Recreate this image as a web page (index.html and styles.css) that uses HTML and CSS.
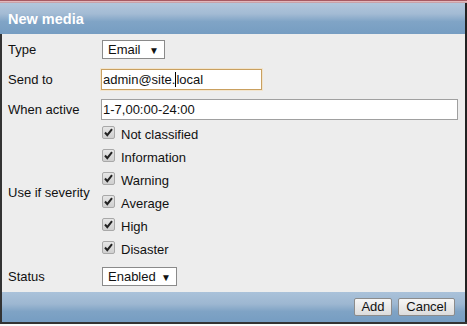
FILE: index.html
```html
<!DOCTYPE html>
<html>
<head>
<meta charset="utf-8">
<link rel="stylesheet" href="styles.css">
</head>
<body>
<div class="dialog">
  <div class="topline"></div>
  <div class="header">New media</div>
  <div class="body">
    <div class="row r-type">
      <div class="label">Type</div>
      <div class="select sel-email"><span>Email</span><span class="arrow">▼</span></div>
    </div>
    <div class="row r-send">
      <div class="label">Send to</div>
      <div class="input focus w-send">admin@site.<span class="caret"></span>local</div>
    </div>
    <div class="row r-when">
      <div class="label">When active</div>
      <div class="input w-when">1-7,00:00-24:00</div>
    </div>
    <div class="row r-sev">
      <div class="label">Use if severity</div>
      <div class="checks">
        <div class="check"><span class="box"><svg viewBox="0 0 13 13" width="13" height="13"><path d="M3 6.5 L5.3 9.2 L10 3.2" fill="none" stroke="#222" stroke-width="2"/></svg></span>Not classified</div>
        <div class="check"><span class="box"><svg viewBox="0 0 13 13" width="13" height="13"><path d="M3 6.5 L5.3 9.2 L10 3.2" fill="none" stroke="#222" stroke-width="2"/></svg></span>Information</div>
        <div class="check"><span class="box"><svg viewBox="0 0 13 13" width="13" height="13"><path d="M3 6.5 L5.3 9.2 L10 3.2" fill="none" stroke="#222" stroke-width="2"/></svg></span>Warning</div>
        <div class="check"><span class="box"><svg viewBox="0 0 13 13" width="13" height="13"><path d="M3 6.5 L5.3 9.2 L10 3.2" fill="none" stroke="#222" stroke-width="2"/></svg></span>Average</div>
        <div class="check"><span class="box"><svg viewBox="0 0 13 13" width="13" height="13"><path d="M3 6.5 L5.3 9.2 L10 3.2" fill="none" stroke="#222" stroke-width="2"/></svg></span>High</div>
        <div class="check"><span class="box"><svg viewBox="0 0 13 13" width="13" height="13"><path d="M3 6.5 L5.3 9.2 L10 3.2" fill="none" stroke="#222" stroke-width="2"/></svg></span>Disaster</div>
      </div>
    </div>
    <div class="row r-status">
      <div class="label">Status</div>
      <div class="select sel-status"><span>Enabled</span><span class="arrow">▼</span></div>
    </div>
  </div>
  <div class="footer">
    <button class="btn btn-add">Add</button>
    <button class="btn btn-cancel">Cancel</button>
  </div>
  <div class="bottomline"></div>
</div>
</body>
</html>
```
FILE: styles.css
```css
html, body {
  margin: 0;
  padding: 0;
  background: #ffffff;
}
.dialog {
  width: 467px;
  height: 326px;
  box-sizing: border-box;
  font-family: "Liberation Sans", Arial, sans-serif;
  font-size: 13px;
  color: #111;
  display: flex;
  flex-direction: column;
  overflow: hidden;
}
.topline {
  height: 3px;
  box-sizing: border-box;
  border-top: 1px solid #a85a62;
  background: #e2b8bc;
  border-bottom: 1px solid #c9a2a8;
}
.header {
  height: 31px;
  box-sizing: border-box;
  padding-left: 8px;
  display: flex;
  align-items: center;
  font-weight: bold;
  font-size: 14.5px;
  color: #ffffff;
  background: linear-gradient(#b2c7dc 0%, #a3bbd4 35%, #80a4c6 60%, #769dc2 100%);
  border-right: 2px solid #222;
}
.body {
  flex: 1;
  background: #ededed;
  border-left: 2px solid #333;
  border-right: 2px solid #222;
  padding: 6px 0 0 6px;
  display: flex;
  flex-direction: column;
}
.row {
  display: flex;
  align-items: center;
}
.label {
  width: 94px;
  flex: none;
}
.r-send { margin-top: 10px; }
.r-when { margin-top: 9px; }
.r-sev { margin-top: 3px; }
.r-status { margin-top: 6px; }

.select {
  height: 19px;
  box-sizing: border-box;
  background: #fff;
  border: 1px solid #8a8a8a;
  display: flex;
  align-items: center;
  justify-content: space-between;
  padding: 0 5px 0 5px;
}
.arrow {
  font-size: 10px;
  margin-top: 1px;
}
.sel-email { width: 63px; }
.sel-status { width: 75px; }

.input {
  height: 21px;
  box-sizing: border-box;
  background: #fff;
  border: 1px solid #a0a0a0;
  padding: 0 1px;
  display: flex;
  align-items: center;
  margin-left: -1px;
}
.input.focus {
  border: 1px solid #c9a060;
  box-shadow: 0 0 0 1px #f2e4cc;
}
.caret {
  display: inline-block;
  width: 1px;
  height: 15px;
  background: #000;
}
.w-send { width: 161px; }
.w-when { width: 357px; }

.checks {
  display: flex;
  flex-direction: column;
}
.check {
  height: 23px;
  display: flex;
  align-items: center;
}
.box {
  width: 13px;
  height: 13px;
  box-sizing: border-box;
  border: 1px solid #a8a8a8;
  border-radius: 2px;
  background: linear-gradient(#e6e6e6, #cfcfcf);
  margin-right: 6px;
  margin-top: -5px;
  display: flex;
  align-items: center;
  justify-content: center;
  overflow: hidden;
}
.box svg {
  flex: none;
}

.footer {
  height: 30px;
  box-sizing: border-box;
  background: linear-gradient(#aac2da 0%, #9db7d1 40%, #7fa3c5 65%, #769dc2 100%);
  border-left: 2px solid #333;
  border-right: 2px solid #222;
  display: flex;
  align-items: center;
  justify-content: flex-end;
  padding-right: 10px;
  gap: 6px;
}
.btn {
  font-family: "Liberation Sans", Arial, sans-serif;
  font-size: 13px;
  height: 18px;
  box-sizing: border-box;
  padding: 0;
  border: 1px solid #8c8c8c;
  border-radius: 2px;
  background: linear-gradient(#f6f6f6, #dcdcdc);
  color: #111;
  line-height: 14px;
}
.btn-add { width: 38px; }
.btn-cancel { width: 57px; }
.bottomline {
  height: 4px;
  box-sizing: border-box;
  border-top: 2px solid #333;
  background: #fafafa;
}
```
